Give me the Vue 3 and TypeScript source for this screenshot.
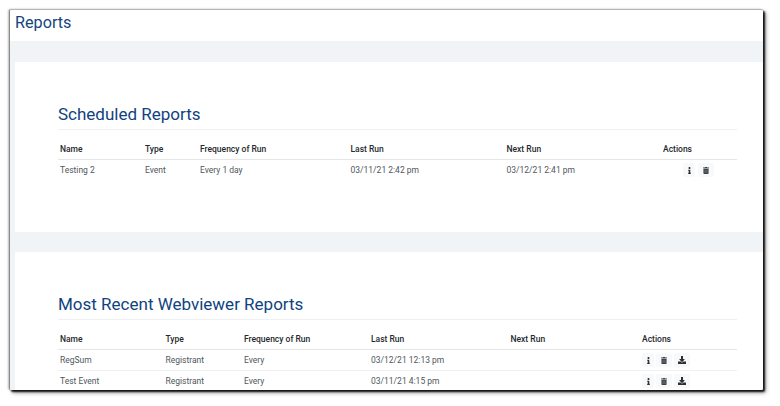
<script setup lang="ts">
interface Row {
  name: string
  type: string
  freq: string
  last: string
  next: string
  download: boolean
}
const scheduled: Row[] = [
  { name: 'Testing 2', type: 'Event', freq: 'Every 1 day', last: '03/11/21 2:42 pm', next: '03/12/21 2:41 pm', download: false },
]
const recent: Row[] = [
  { name: 'RegSum', type: 'Registrant', freq: 'Every', last: '03/12/21 12:13 pm', next: '', download: true },
  { name: 'Test Event', type: 'Registrant', freq: 'Every', last: '03/11/21 4:15 pm', next: '', download: true },
]
const sections = [
  { title: 'Scheduled Reports', rows: scheduled, cls: 'sched' },
  { title: 'Most Recent Webviewer Reports', rows: recent, cls: 'recent' },
]
</script>

<template>
  <div class="page">
    <div class="window">
      <header class="top"><h1>Reports</h1></header>
      <div class="body">
        <section v-for="s in sections" :key="s.title" class="card" :class="s.cls">
          <h2>{{ s.title }}</h2>
          <div class="grid head">
            <div>Name</div><div>Type</div><div>Frequency of Run</div><div>Last Run</div><div>Next Run</div><div class="act-h">Actions</div>
          </div>
          <div v-for="r in s.rows" :key="r.name" class="grid row">
            <div>{{ r.name }}</div><div>{{ r.type }}</div><div>{{ r.freq }}</div><div>{{ r.last }}</div><div>{{ r.next }}</div>
            <div class="acts">
              <span class="btn b-info">
                <svg viewBox="0 0 192 512" width="3" height="7"><path fill="#2b3034" d="M20 424h20V280H20c-11 0-20-9-20-20v-48c0-11 9-20 20-20h112c11 0 20 9 20 20v212h20c11 0 20 9 20 20v48c0 11-9 20-20 20H20c-11 0-20-9-20-20v-48c0-11 9-20 20-20zM96 0c40 0 72 32 72 72s-32 72-72 72-72-32-72-72S56 0 96 0z"/></svg>
              </span>
              <span class="btn b-trash">
                <svg viewBox="0 0 448 512" width="6" height="7"><path fill="#3a3f44" d="M32 464c0 26 22 48 48 48h288c26 0 48-22 48-48V128H32zM432 32H312l-9-19C299 5 291 0 282 0H166c-9 0-17 5-21 13l-9 19H16C7 32 0 39 0 48v32c0 9 7 16 16 16h416c9 0 16-7 16-16V48c0-9-7-16-16-16z"/><path fill="#8d9297" d="M128 192h48v256h-48zM272 192h48v256h-48z"/></svg>
              </span>
              <span v-if="r.download" class="btn b-down">
                <svg viewBox="0 0 512 512" width="8" height="8"><path fill="#2b3034" d="M216 0h80c13 0 24 11 24 24v168h88c18 0 27 21 14 34L270 378c-8 8-20 8-28 0L90 226c-13-13-4-34 14-34h88V24c0-13 11-24 24-24zm296 376v112c0 13-11 24-24 24H24c-13 0-24-11-24-24V376c0-13 11-24 24-24h147l49 49c20 20 52 20 72 0l49-49h147c13 0 24 11 24 24z"/></svg>
              </span>
            </div>
          </div>
        </section>
      </div>
    </div>
  </div>
</template>

<style>
html, body { margin: 0; background: #fff; }
</style>

<style scoped>
.page {
  width: 780px;
  height: 406px;
  padding: 9px 17px 16px 9px;
  box-sizing: border-box;
  background: #fff;
  overflow: hidden;
  font-family: Roboto, "Liberation Sans", sans-serif;
}
.window {
  height: 100%;
  overflow: hidden;
  background: #fff;
  border-radius: 2px;
  border-top: 1px solid #b5b5b5;
  border-left: 1px solid #8a8a8a;
  box-shadow: 2px 2px 2px 0 rgba(0, 0, 0, .9), 3px 3px 4px 0 rgba(0, 0, 0, .35), -1px 0 2px rgba(0, 0, 0, .25);
  box-sizing: border-box;
}
.top { height: 31px; display: flex; align-items: center; padding-left: 5px; }
h1 {
  margin: 0;
  font-size: 16.2px;
  font-weight: 400;
  color: #15457f;
  line-height: 24px;
  position: relative;
  top: -3px;
}
.body { background: #f1f4f7; padding: 21px 0 0 5px; display: flex; flex-direction: column; gap: 20px; }
.card { background: #fff; height: 170px; padding: 40px 26px 0 43px; box-sizing: border-box; flex: none; }
h2 {
  margin: 0;
  font-size: 17px;
  font-weight: 400;
  line-height: 25px;
  height: 27px;
  color: #0f437f;
  border-bottom: 1px solid #eef0f2;
}
.grid { display: grid; align-items: center; font-size: 8.5px; padding-left: 2px; }
.sched .grid { grid-template-columns: 85px 55px 150.5px 156px 156.5px 1fr; }
.recent .grid { grid-template-columns: 105.5px 78.5px 127px 139.5px 131.5px 1fr; }
.head { height: 30px; padding-top: 8px; font-weight: 500; color: #25292d; border-bottom: 1px solid #e4e6e8; box-sizing: border-box; }
.row { height: 21px; color: #50565c; border-bottom: 1px solid #eef0f2; box-sizing: border-box; }
.sched .row { height: 20px; border-bottom: 0; }
.acts { display: flex; gap: 2px; align-items: center; }
.sched .acts { gap: 3px; padding-left: 20px; }
.btn {
  height: 14px;
  background: #f8f9fa;
  border-radius: 2px;
  display: inline-flex;
  align-items: center;
  justify-content: center;
}
.b-info { width: 12px; }
.b-trash { width: 16px; }
.b-down { width: 16px; }
</style>
